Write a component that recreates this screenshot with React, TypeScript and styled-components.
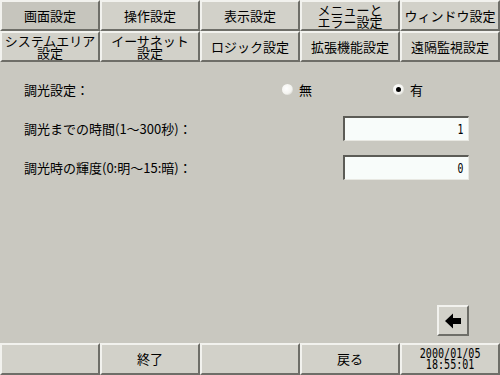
import React from "react";
import styled, { createGlobalStyle } from "styled-components";

const Global = createGlobalStyle`
  html, body { margin: 0; padding: 0; background: #c9c8c0; }
  body { font-family: "Noto Sans CJK JP", "DejaVu Sans", sans-serif; }
`;

const Screen = styled.div`
  width: 500px;
  height: 375px;
  background: #c9c8c0;
  display: flex;
  flex-direction: column;
  overflow: hidden;
  color: #000;
`;

const TabGrid = styled.div`
  display: grid;
  grid-template-columns: repeat(5, 100px);
  grid-template-rows: 31px 31px;
`;

const Tab = styled.div<{ $active?: boolean }>`
  box-sizing: border-box;
  display: flex;
  align-items: center;
  justify-content: center;
  text-align: center;
  font-size: 13px;
  line-height: 12px;
  background: ${(p) => (p.$active ? "#c6c5bd" : "#d2d1c9")};
  border-top: 2px solid #f2f2ee;
  border-left: 2px solid #f2f2ee;
  border-right: 2px solid #6e6e68;
  border-bottom: 2px solid #6e6e68;
  white-space: pre-line;
`;

const Body = styled.div`
  flex: 1;
  display: flex;
  flex-direction: column;
  padding: 15px 31px 0 24px;
`;

const Row = styled.div`
  display: flex;
  align-items: center;
  height: 24px;
  margin-bottom: 15px;
  font-size: 13px;
`;

const Label = styled.div`
  flex: 1;
`;

const RadioGroup = styled.div`
  display: flex;
  width: 187px;
`;

const RadioItem = styled.div<{ $first?: boolean }>`
  display: flex;
  align-items: center;
  gap: 6px;
  flex: ${(p) => (p.$first ? "0 0 111px" : "1")};
`;

const RadioDot = styled.span<{ $on?: boolean }>`
  width: 11px;
  height: 11px;
  border-radius: 50%;
  background: radial-gradient(circle at 40% 40%, #ffffff 0%, #f4f4f0 55%, #b8b8b0 100%);
  display: inline-flex;
  align-items: center;
  justify-content: center;
  &::after {
    content: "";
    width: 5px;
    height: 5px;
    border-radius: 50%;
    background: ${(p) => (p.$on ? "#000" : "transparent")};
  }
`;

const FieldText = styled.span`
  display: inline-block;
  transform: scaleX(0.7);
  transform-origin: right;
`;

const FieldBox = styled.div`
  box-sizing: border-box;
  width: 126px;
  height: 25px;
  background: #f8fcfa;
  border-top: 2px solid #5c5c56;
  border-left: 2px solid #5c5c56;
  border-right: 1px solid #e8e8e2;
  border-bottom: 1px solid #e8e8e2;
  display: flex;
  align-items: center;
  justify-content: flex-end;
  padding-right: 5px;
  font-family: "DejaVu Sans Mono", monospace;
  font-size: 14px;
`;

const Spacer = styled.div`
  flex: 1;
`;

const BackRow = styled.div`
  display: flex;
  justify-content: flex-end;
  padding: 0 31px 7px 0;
`;

const ArrowButton = styled.div`
  box-sizing: border-box;
  width: 32px;
  height: 31px;
  background: #d2d1c9;
  border-top: 2px solid #f2f2ee;
  border-left: 2px solid #f2f2ee;
  border-right: 2px solid #6e6e68;
  border-bottom: 2px solid #6e6e68;
  display: flex;
  align-items: center;
  justify-content: center;
`;

const BottomBar = styled.div`
  display: grid;
  grid-template-columns: repeat(5, 100px);
  height: 32px;
`;

const BottomButton = styled.div<{ $mono?: boolean }>`
  box-sizing: border-box;
  background: #d2d1c9;
  border-top: 2px solid #f2f2ee;
  border-left: 2px solid #f2f2ee;
  border-right: 2px solid #6e6e68;
  border-bottom: 2px solid #6e6e68;
  display: flex;
  align-items: center;
  justify-content: center;
  text-align: center;
  font-size: ${(p) => (p.$mono ? "14px" : "13px")};
  font-family: ${(p) => (p.$mono ? '"DejaVu Sans Mono", monospace' : "inherit")};
  line-height: ${(p) => (p.$mono ? "11px" : "12px")};
  white-space: pre-line;
`;

const Narrow = styled.span`
  display: inline-block;
  transform: scaleX(0.72);
`;

export default function App() {
  const tabs1 = ["画面設定", "操作設定", "表示設定", "メニューと\nエラー設定", "ウィンドウ設定"];
  const tabs2 = ["システムエリア\n設定", "イーサネット\n設定", "ロジック設定", "拡張機能設定", "遠隔監視設定"];
  return (
    <Screen>
      <Global />
      <TabGrid>
        {tabs1.map((t, i) => (
          <Tab key={t} $active={i === 0}>{t}</Tab>
        ))}
        {tabs2.map((t) => (
          <Tab key={t}>{t}</Tab>
        ))}
      </TabGrid>
      <Body>
        <Row>
          <Label>調光設定：</Label>
          <RadioGroup>
            <RadioItem $first>
              <RadioDot />
              <span>無</span>
            </RadioItem>
            <RadioItem>
              <RadioDot $on />
              <span>有</span>
            </RadioItem>
          </RadioGroup>
        </Row>
        <Row>
          <Label>調光までの時間(1～300秒)：</Label>
          <FieldBox>
            <FieldText>1</FieldText>
          </FieldBox>
        </Row>
        <Row>
          <Label>調光時の輝度(0:明～15:暗)：</Label>
          <FieldBox>
            <FieldText>0</FieldText>
          </FieldBox>
        </Row>
      </Body>
      <Spacer />
      <BackRow>
        <ArrowButton>
          <svg width="18" height="16" viewBox="0 0 18 16">
            <path d="M1 8 L9 0.5 L9 5 L17 5 L17 11 L9 11 L9 15.5 Z" fill="#000" />
          </svg>
        </ArrowButton>
      </BackRow>
      <BottomBar>
        <BottomButton />
        <BottomButton>終了</BottomButton>
        <BottomButton />
        <BottomButton>戻る</BottomButton>
        <BottomButton $mono>
          <Narrow>{"2000/01/05\n18:55:01"}</Narrow>
        </BottomButton>
      </BottomBar>
    </Screen>
  );
}
